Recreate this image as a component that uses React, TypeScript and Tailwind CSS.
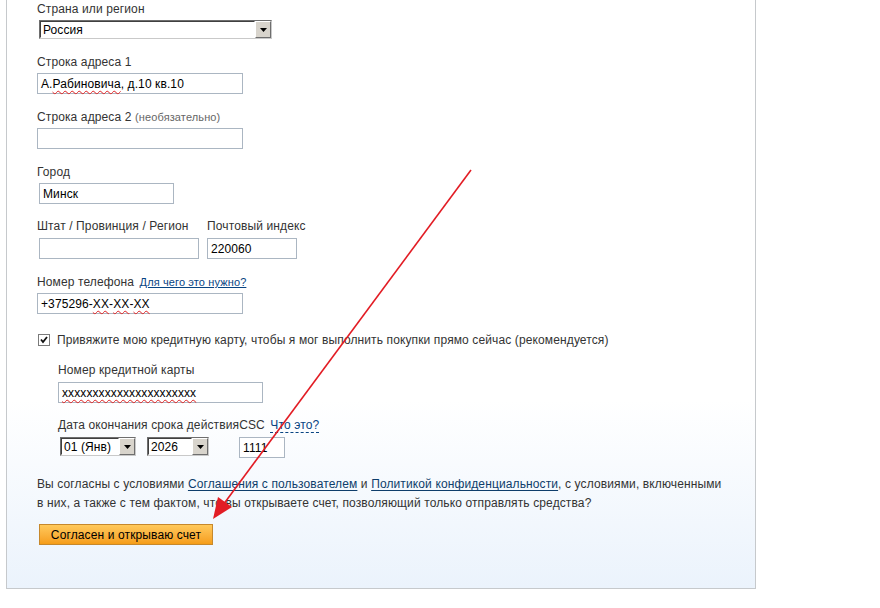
import React from "react";

const font = { fontFamily: '"Liberation Sans", Arial, sans-serif' };

function Label({ children, className = "" }: { children: React.ReactNode; className?: string }) {
  return <div className={`mb-[4px] h-[14px] text-[12px] leading-[14px] tracking-[0.12px] text-[#333] ${className}`}>{children}</div>;
}

function TextBox({ children, className = "" }: { children?: React.ReactNode; className?: string }) {
  return (
    <div
      className={`flex h-[21px] items-center border border-[#abb6c2] bg-white px-[3px] text-[12px] tracking-[0.1px] text-black ${className}`}
    >
      {children}
    </div>
  );
}

function Typo({ children }: { children: React.ReactNode }) {
  return <span className="underline decoration-[#e02020] decoration-wavy decoration-[1px] underline-offset-[2px]">{children}</span>;
}

function Select({ value, className = "" }: { value: string; className?: string }) {
  return (
    <div
      className={`flex h-[19px] items-stretch border border-t-[#6e6e6e] border-l-[#6e6e6e] border-r-[#c9c9c9] border-b-[#c9c9c9] bg-white ${className}`}
    >
      <div className="flex flex-1 items-center border border-t-[#404040] border-l-[#404040] border-r-white border-b-white pl-[2px] text-[12px] tracking-[0.1px] text-black">
        {value}
      </div>
      <div className="flex w-[16px] items-center justify-center border border-t-white border-l-white border-r-[#6e6e6e] border-b-[#6e6e6e] bg-[#d8d4cc]">
        <svg width="7" height="4" viewBox="0 0 7 4">
          <polygon points="0,0 7,0 3.5,4" fill="#000" />
        </svg>
      </div>
    </div>
  );
}

export default function App() {
  return (
    <div className="relative h-[608px] w-[880px] bg-white" style={font}>
      <div className="ml-[6px] h-[589px] w-[750px] border-x border-b border-[#c6c9cc] bg-linear-to-b from-white from-[68%] to-[#ebf3fc] pl-[30px] pt-[2px]">
        <Label>Страна или регион</Label>
        <Select value="Россия" className="ml-[2px] w-[233px]" />

        <div className="mt-[16px]">
          <Label>Строка адреса 1</Label>
          <TextBox className="w-[206px]">
            <span>
              А.<Typo>Рабиновича</Typo>, д.10 кв.10
            </span>
          </TextBox>
        </div>

        <div className="mt-[16px]">
          <Label>
            Строка адреса 2 <span className="text-[11px] text-[#666]">(необязательно)</span>
          </Label>
          <TextBox className="w-[206px]" />
        </div>

        <div className="mt-[16px]">
          <Label>Город</Label>
          <TextBox className="ml-[2px] w-[135px]">Минск</TextBox>
        </div>

        <div className="mt-[15px] flex gap-[8px]">
          <div>
            <Label className="mb-[5px]">Штат / Провинция / Регион</Label>
            <TextBox className="ml-[2px] w-[160px]" />
          </div>
          <div>
            <Label className="mb-[5px]">Почтовый индекс</Label>
            <TextBox className="w-[90px]">220060</TextBox>
          </div>
        </div>

        <div className="mt-[16px]">
          <Label>
            Номер телефона{" "}
            <a className="ml-[2px] text-[11px] text-[#084482] underline underline-offset-[1px]">Для чего это нужно?</a>
          </Label>
          <TextBox className="w-[206px]">
            <span>
              +375296-<Typo>XX</Typo>-<Typo>XX</Typo>-<Typo>XX</Typo>
            </span>
          </TextBox>
        </div>

        <div className="mt-[19px] flex h-[14px] items-center gap-[7px] text-[12px] tracking-[0.12px] text-[#333]">
          <svg width="12" height="12" viewBox="0 0 12 12" className="ml-[1px]">
            <rect x="0.5" y="0.5" width="11" height="11" fill="#fff" stroke="#7a7a7a" />
            <polyline points="3,5.5 5,8 9,3" fill="none" stroke="#111" strokeWidth="1.8" />
          </svg>
          <span>Привяжите мою кредитную карту, чтобы я мог выполнить покупки прямо сейчас (рекомендуется)</span>
        </div>

        <div className="ml-[21px]">
          <div className="mt-[16px]">
            <Label className="mb-[5px]">Номер кредитной карты</Label>
            <TextBox className="w-[205px] text-[11px]">
              <Typo>xxxxxxxxxxxxxxxxxxxxxx</Typo>
            </TextBox>
          </div>

          <div className="mt-[15px]">
            <Label className="mb-[5px]">
              Дата окончания срока действияCSC{" "}
              <a className="ml-[2px] text-[#084482] underline decoration-dashed underline-offset-[3px]">Что это?</a>
            </Label>
            <div className="flex items-start">
              <Select value="01 (Янв)" className="ml-[2px] w-[76px]" />
              <Select value="2026" className="ml-[11px] w-[62px]" />
              <TextBox className="ml-[30px] w-[46px]">1111</TextBox>
            </div>
          </div>
        </div>

        <p className="mt-[17px] max-w-[690px] text-[12px] leading-[19px] tracking-[0.12px] text-[#333]">
          Вы согласны с условиями{" "}
          <a className="text-[#0e3d6b] underline underline-offset-[2px]">Соглашения с пользователем</a> и{" "}
          <a className="text-[#0e3d6b] underline underline-offset-[2px]">Политикой конфиденциальности</a>, с условиями,
          включенными в них, а также с тем фактом, что вы открываете счет, позволяющий только отправлять средства?
        </p>

        <button className="ml-[2px] mt-[11px] flex h-[21px] w-[174px] items-center justify-center border border-[#c6882c] bg-linear-to-b from-[#ffc95a] to-[#f59d16] text-[12px] tracking-[0.12px] text-black">
          Согласен и открываю счет
        </button>
      </div>

      <svg className="pointer-events-none absolute left-0 top-0" width="880" height="608" viewBox="0 0 880 608">
        <line x1="471" y1="170" x2="223" y2="505" stroke="#e21c24" strokeWidth="1.6" />
        <polygon points="213,519 218,497 232,507" fill="#e21c24" />
      </svg>
    </div>
  );
}
